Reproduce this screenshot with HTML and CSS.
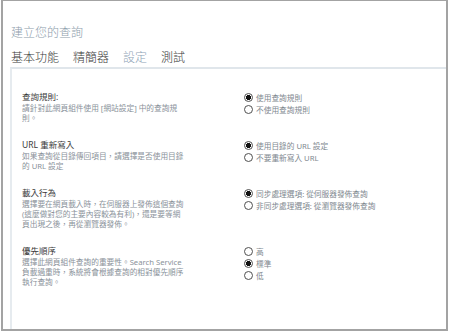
FILE: index.html
```html
<!DOCTYPE html>
<html lang="zh-Hant">
<head>
    <meta charset="UTF-8">
    <title>建立您的查詢</title>
    <link rel="stylesheet" href="styles.css">
</head>
<body>
    <div class="frame">
        <div class="title">建立您的查詢</div>
        <div class="tabs">
            <span class="tab">基本功能</span>
            <span class="tab">精簡器</span>
            <span class="tab active">設定</span>
            <span class="tab">測試</span>
        </div>
        <div class="panel">
            <div class="row">
                <div class="info">
                    <div class="label">查詢規則:</div>
                    <div class="desc">請針對此網頁組件使用 [網站設定] 中的查詢規則。</div>
                </div>
                <div class="options">
                    <label class="opt"><input type="radio" name="rules" checked>使用查詢規則</label>
                    <label class="opt"><input type="radio" name="rules">不使用查詢規則</label>
                </div>
            </div>
            <div class="row">
                <div class="info">
                    <div class="label">URL 重新寫入</div>
                    <div class="desc">如果查詢從目錄傳回項目，請選擇是否使用目錄的 URL 設定</div>
                </div>
                <div class="options">
                    <label class="opt"><input type="radio" name="url" checked>使用目錄的 URL 設定</label>
                    <label class="opt"><input type="radio" name="url">不要重新寫入 URL</label>
                </div>
            </div>
            <div class="row">
                <div class="info">
                    <div class="label">載入行為</div>
                    <div class="desc">選擇要在網頁載入時，在伺服器上發佈這個查詢 (這麼做對您的主要內容較為有利)，還是要等網頁出現之後，再從瀏覽器發佈。</div>
                </div>
                <div class="options">
                    <label class="opt"><input type="radio" name="load" checked>同步處理選項: 從伺服器發佈查詢</label>
                    <label class="opt"><input type="radio" name="load">非同步處理選項: 從瀏覽器發佈查詢</label>
                </div>
            </div>
            <div class="row">
                <div class="info">
                    <div class="label">優先順序</div>
                    <div class="desc">選擇此網頁組件查詢的重要性。Search Service 負載過重時，系統將會根據查詢的相對優先順序執行查詢。</div>
                </div>
                <div class="options">
                    <label class="opt"><input type="radio" name="priority">高</label>
                    <label class="opt"><input type="radio" name="priority" checked>標準</label>
                    <label class="opt"><input type="radio" name="priority">低</label>
                </div>
            </div>
        </div>
    </div>
</body>
</html>
```

FILE: styles.css
```css
body {
    margin: 0;
    background: #fff;
    font-family: "Noto Sans", "Noto Sans CJK TC", sans-serif;
}
.frame {
    box-sizing: border-box;
    width: 447px;
    height: 331px;
    margin-left: 1px;
    border: 2px solid #a3a3a3;
    border-top-width: 1px;
    padding-left: 7px;
    display: flex;
    flex-direction: column;
    overflow: hidden;
}
.title {
    padding: 24px 0 0 1px;
    font-size: 12px;
    line-height: 16px;
    font-weight: 300;
    color: #8c9cab;
}
.tabs {
    display: flex;
    gap: 14px;
    margin-top: 9px;
    padding-left: 1px;
    font-size: 12px;
    line-height: 16px;
    font-weight: 300;
    color: #3a3a3a;
}
.tab.active {
    color: #8ea3b6;
}
.panel {
    flex: 1;
    margin-top: 1px;
    border-top: 2px solid #e0e6eb;
    border-left: 2px solid #e6ebef;
    padding: 22px 0 0 10px;
}
.row {
    display: grid;
    grid-template-columns: 164px 1fr;
    column-gap: 58px;
    margin-bottom: 16px;
}
.label {
    font-size: 8.5px;
    line-height: 12px;
    color: #3a3a3a;
}
.desc {
    font-size: 7.7px;
    line-height: 10px;
    color: #8a929a;
}
.options {
    display: flex;
    flex-direction: column;
}
.opt {
    display: flex;
    align-items: center;
    height: 12px;
    font-size: 7.7px;
    color: #80888f;
}
.opt input {
    appearance: none;
    box-sizing: border-box;
    width: 9px;
    height: 9px;
    margin: 0 3px 0 0;
    border: 1px solid #505050;
    border-radius: 50%;
    background: #fff;
}
.opt input:checked {
    background: radial-gradient(circle, #111 0 2.3px, #fff 2.8px);
}
```
